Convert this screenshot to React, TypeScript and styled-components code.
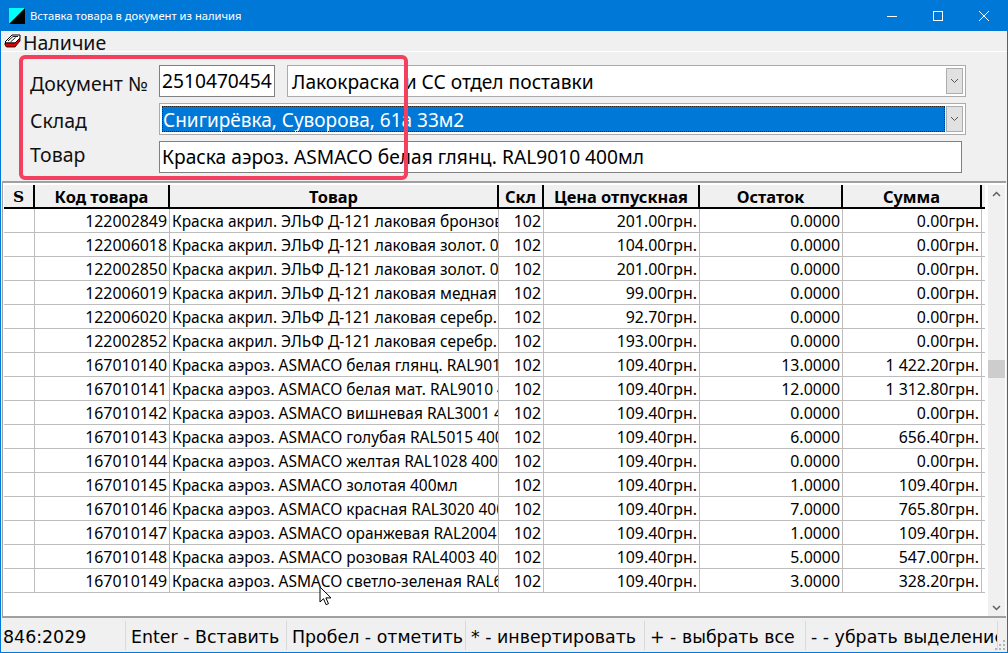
import React from "react";
import styled, { createGlobalStyle } from "styled-components";

const Global = createGlobalStyle`
  html, body { margin: 0; padding: 0; overflow: hidden; }
  body { font-family: "Noto Sans", sans-serif; }
  * { box-sizing: border-box; }
`;

const Win = styled.div`
  position: relative;
  width: 1008px;
  height: 653px;
  background: #f0f0f0;
  border: 1px solid #0078d7;
  border-top: 0;
  display: flex;
  flex-direction: column;
  overflow: hidden;
`;
const TitleBar = styled.div`
  height: 31px;
  flex: none;
  background: #0078d7;
  color: #fff;
  display: flex;
  align-items: center;
  padding-left: 8px;
  font: 11.2px "Noto Sans", sans-serif;
`;
const TitleText = styled.span`
  margin-left: 5px;
  flex: 1;
`;
const WinBtn = styled.div`
  width: 46px;
  height: 31px;
  display: flex;
  align-items: center;
  justify-content: center;
`;
const MenuBar = styled.div`
  height: 21px;
  flex: none;
  display: flex;
  align-items: center;
  padding-left: 3px;
  border-bottom: 1px solid #fff;
  font: 19.5px/20px "Noto Sans", sans-serif;
  color: #111;
`;
const MenuLabel = styled.span`
  margin-left: 2px;
  padding-top: 3px;
`;
const Form = styled.div`
  height: 129px;
  flex: none;
  padding: 13px 41px 0 158px;
  display: flex;
  flex-direction: column;
  gap: 6px;
`;
const FormRow = styled.div`
  position: relative;
  display: flex;
  gap: 12px;
  height: 32px;
`;
const Label = styled.span<{ $top: number }>`
  position: absolute;
  left: -129px;
  top: ${(p) => p.$top}px;
  font: 19.5px/26px "Noto Sans", sans-serif;
  color: #111;
`;
const Input = styled.div<{ $w?: number; $trim?: number }>`
  border: 1px solid #808080;
  background: #fff;
  padding-left: 2px;
  font: 19.2px/29px "Noto Sans", sans-serif;
  color: #000;
  white-space: nowrap;
  overflow: hidden;
  ${(p) => (p.$w ? `width:${p.$w}px;flex:none;` : "flex:1;")}
  ${(p) => (p.$trim ? `margin-right:${p.$trim}px;` : "")}
`;
const Combo = styled.div`
  flex: 1;
  border: 1px solid #ababab;
  background: #fff;
  display: flex;
  padding: 2px;
  min-width: 0;
`;
const ComboValue = styled.div<{ $sel?: boolean }>`
  flex: 1;
  font: ${(p) => (p.$sel ? 19 : 19.2)}px/28px "Noto Sans", sans-serif;
  height: 26px;
  padding-left: ${(p) => (p.$sel ? 1 : 2)}px;
  color: ${(p) => (p.$sel ? "#fff" : "#000")};
  background: ${(p) => (p.$sel ? "#0078d7" : "transparent")};
  outline: ${(p) => (p.$sel ? "1px dotted #222" : "none")};
  outline-offset: -1px;
`;
const ComboBtn = styled.div`
  width: 17px;
  flex: none;
  background: #e1e1e1;
  border: 1px solid #adadad;
  margin-left: 1px;
  display: flex;
  align-items: center;
  justify-content: center;
`;
const GridArea = styled.div`
  flex: 1;
  min-height: 0;
  display: flex;
  margin: 0 1px;
  background: #fff;
  border-top: 2px solid #a0a0a0;
  border-left: 1px solid #a0a0a0;
  border-bottom: 2px solid #a0a0a0;
  padding: 2px 0 0 1px;
`;
const Table = styled.div`
  width: 981px;
  flex: none;
  display: flex;
  flex-direction: column;
`;
const cols = "31px 135px 329px 45px 156px 143px 139px";
const HeadRow = styled.div`
  display: grid;
  grid-template-columns: ${cols};
  height: 24px;
  background: #f0f0f0;
  border-bottom: 2px solid #000;
`;
const HeadCell = styled.div<{ $serif?: boolean }>`
  border-right: 2px solid #000;
  text-align: center;
  font: bold ${(p) => (p.$serif ? "15.4px" : "16.4px")}/24px ${(p) => (p.$serif ? '"DejaVu Serif", serif' : '"Noto Sans", sans-serif')};
  color: #000;
  white-space: nowrap;
  overflow: hidden;
`;
const Row = styled.div`
  display: grid;
  grid-template-columns: ${cols};
  height: 24px;
  border-bottom: 1px solid #bdbdbd;
`;
const Cell = styled.div<{ $num?: boolean }>`
  border-right: 1px solid #bdbdbd;
  font: ${(p) => (p.$num ? 15.9 : 15.5)}px/25px "Noto Sans", sans-serif;
  color: #000;
  padding: 0 2px;
  text-align: ${(p) => (p.$num ? "right" : "left")};
  white-space: nowrap;
  overflow: hidden;
`;
const Scrollbar = styled.div`
  width: 17px;
  flex: none;
  margin-left: 3px;
  background: #f0f0f0;
  display: flex;
  flex-direction: column;
  align-items: stretch;
  height: 100%;
`;
const ScrollArrow = styled.div`
  height: 17px;
  flex: none;
  display: flex;
  align-items: center;
  justify-content: center;
`;
const ScrollTrack = styled.div`
  flex: 1;
  padding-top: 158px;
`;
const ScrollThumb = styled.div`
  height: 18px;
  background: #cdcdcd;
`;
const StatusBar = styled.div`
  height: 34px;
  flex: none;
  display: flex;
  align-items: center;
  padding: 3px 0 2px 0;
`;
const StatusCell = styled.div<{ $w: number; $pad: number }>`
  width: ${(p) => p.$w}px;
  flex: none;
  height: 100%;
  border-right: 1px solid #d9d9d9;
  font: 17.4px/32px "DejaVu Sans", sans-serif;
  color: #000;
  padding-left: ${(p) => p.$pad}px;
  white-space: nowrap;
  overflow: hidden;
`;
const Grip = styled.svg`
  position: absolute;
  right: 1px;
  bottom: 1px;
`;
const Annotation = styled.div`
  position: absolute;
  left: 18px;
  top: 55px;
  width: 389px;
  height: 125px;
  border: 4px solid #f2405e;
  border-radius: 6px;
  pointer-events: none;
`;
const Cursor = styled.svg`
  position: absolute;
  left: 318px;
  top: 586px;
`;

const name = [
  "Краска акрил. ЭЛЬФ Д-121 лаковая бронзовая",
  "Краска акрил. ЭЛЬФ Д-121 лаковая золот. 0,4л",
  "Краска акрил. ЭЛЬФ Д-121 лаковая золот. 0,8л",
  "Краска акрил. ЭЛЬФ Д-121 лаковая медная 0,4л",
  "Краска акрил. ЭЛЬФ Д-121 лаковая серебр. 0,4л",
  "Краска акрил. ЭЛЬФ Д-121 лаковая серебр. 0,8л",
  "Краска аэроз. ASMACO белая глянц. RAL9010 400мл",
  "Краска аэроз. ASMACO белая мат. RAL9010 400мл",
  "Краска аэроз. ASMACO вишневая RAL3001 400мл",
  "Краска аэроз. ASMACO голубая RAL5015 400мл",
  "Краска аэроз. ASMACO желтая RAL1028 400мл",
  "Краска аэроз. ASMACO золотая 400мл",
  "Краска аэроз. ASMACO красная RAL3020 400мл",
  "Краска аэроз. ASMACO оранжевая RAL2004 400мл",
  "Краска аэроз. ASMACO розовая RAL4003 400мл",
  "Краска аэроз. ASMACO светло-зеленая RAL6018 400мл",
];
const rows: [string, string, string, string][] = [
  ["122002849", "201.00грн.", "0.0000", "0.00грн."],
  ["122006018", "104.00грн.", "0.0000", "0.00грн."],
  ["122002850", "201.00грн.", "0.0000", "0.00грн."],
  ["122006019", "99.00грн.", "0.0000", "0.00грн."],
  ["122006020", "92.70грн.", "0.0000", "0.00грн."],
  ["122002852", "193.00грн.", "0.0000", "0.00грн."],
  ["167010140", "109.40грн.", "13.0000", "1 422.20грн."],
  ["167010141", "109.40грн.", "12.0000", "1 312.80грн."],
  ["167010142", "109.40грн.", "0.0000", "0.00грн."],
  ["167010143", "109.40грн.", "6.0000", "656.40грн."],
  ["167010144", "109.40грн.", "0.0000", "0.00грн."],
  ["167010145", "109.40грн.", "1.0000", "109.40грн."],
  ["167010146", "109.40грн.", "7.0000", "765.80грн."],
  ["167010147", "109.40грн.", "1.0000", "109.40грн."],
  ["167010148", "109.40грн.", "5.0000", "547.00грн."],
  ["167010149", "109.40грн.", "3.0000", "328.20грн."],
];
const heads = ["S", "Код товара", "Товар", "Скл", "Цена отпускная", "Остаток", "Сумма"];
const status: [string, number, number][] = [
  ["846:2029", 125, 2],
  ["Enter - Вставить", 161, 5],
  ["Пробел - отметить", 179, 5],
  ["* - инвертировать", 179, 5],
  ["+ - выбрать все", 161, 5],
  ["- - убрать выделение", 192, 5],
];

const Chevron = ({ color = "#555" }: { color?: string }) => (
  <svg width="9" height="6" viewBox="0 0 9 6">
    <path d="M1 1l3.5 3.5L8 1" fill="none" stroke={color} strokeWidth="1" />
  </svg>
);

export default function App() {
  return (
    <Win>
      <Global />
      <TitleBar>
        <svg width="16" height="16" viewBox="0 0 16 16">
          <rect width="16" height="16" fill="#000" />
          <path d="M0 0h16L0 16z" fill="#00ffff" />
        </svg>
        <TitleText>Вставка товара в документ из наличия</TitleText>
        <WinBtn>
          <svg width="10" height="10" viewBox="0 0 10 10"><path d="M0 5.5h10" stroke="#fff" /></svg>
        </WinBtn>
        <WinBtn>
          <svg width="10" height="10" viewBox="0 0 10 10"><rect x=".5" y=".5" width="9" height="9" fill="none" stroke="#fff" /></svg>
        </WinBtn>
        <WinBtn>
          <svg width="10" height="10" viewBox="0 0 10 10"><path d="M0 0l10 10M10 0L0 10" stroke="#fff" /></svg>
        </WinBtn>
      </TitleBar>
      <MenuBar>
        <svg width="17" height="14" viewBox="0 0 17 14">
          <path d="M1 8l7-7h8v3l-5 5H2z" fill="#fff" stroke="#000" />
          <path d="M1 9h10l5-5v3l-5 6H2.5L1 11z" fill="#e00000" stroke="#000" strokeWidth=".8" />
          <path d="M4 7l5-4.5h5M6.5 8l5-4.5" fill="none" stroke="#000" strokeWidth=".9" />
        </svg>
        <MenuLabel>Наличие</MenuLabel>
      </MenuBar>
      <Form>
        <FormRow>
          <Label $top={6}>Документ №</Label>
          <Input $w={116}>2510470454</Input>
          <Combo>
            <ComboValue>Лакокраска и СС отдел поставки</ComboValue>
            <ComboBtn><Chevron /></ComboBtn>
          </Combo>
        </FormRow>
        <FormRow>
          <Label $top={5}>Склад</Label>
          <Combo>
            <ComboValue $sel>Снигирёвка, Суворова, 61а 33м2</ComboValue>
            <ComboBtn><Chevron /></ComboBtn>
          </Combo>
        </FormRow>
        <FormRow>
          <Label $top={1}>Товар</Label>
          <Input $trim={4}>Краска аэроз. ASMACO белая глянц. RAL9010 400мл</Input>
        </FormRow>
      </Form>
      <GridArea>
        <Table>
          <HeadRow>
            {heads.map((h) => <HeadCell key={h} $serif={h === "S"}>{h}</HeadCell>)}
          </HeadRow>
          {rows.map((r, i) => (
            <Row key={r[0]}>
              <Cell />
              <Cell $num>{r[0]}</Cell>
              <Cell>{name[i]}</Cell>
              <Cell $num>102</Cell>
              <Cell $num>{r[1]}</Cell>
              <Cell $num>{r[2]}</Cell>
              <Cell $num>{r[3]}</Cell>
            </Row>
          ))}
        </Table>
        <Scrollbar>
          <ScrollArrow><svg width="9" height="6" viewBox="0 0 9 6"><path d="M1 5l3.5-3.5L8 5" fill="none" stroke="#606060" strokeWidth="1.5" /></svg></ScrollArrow>
          <ScrollTrack><ScrollThumb /></ScrollTrack>
          <ScrollArrow><svg width="9" height="6" viewBox="0 0 9 6"><path d="M1 1l3.5 3.5L8 1" fill="none" stroke="#606060" strokeWidth="1.5" /></svg></ScrollArrow>
        </Scrollbar>
      </GridArea>
      <StatusBar>
        {status.map(([t, w, p]) => <StatusCell key={t} $w={w} $pad={p}>{t}</StatusCell>)}
      </StatusBar>
      <Grip width="12" height="12" viewBox="0 0 12 12">
        <g fill="#b5b5b5">
          <rect x="9" y="1" width="2" height="2" /><rect x="5" y="5" width="2" height="2" /><rect x="9" y="5" width="2" height="2" />
          <rect x="1" y="9" width="2" height="2" /><rect x="5" y="9" width="2" height="2" /><rect x="9" y="9" width="2" height="2" />
        </g>
      </Grip>
      <Annotation />
      <Cursor width="14" height="21" viewBox="0 0 14 21">
        <path d="M1 1v15l3.5-3.3 2.6 6 2.4-1-2.6-5.8H12z" fill="#fff" stroke="#000" strokeWidth="1" />
      </Cursor>
    </Win>
  );
}
